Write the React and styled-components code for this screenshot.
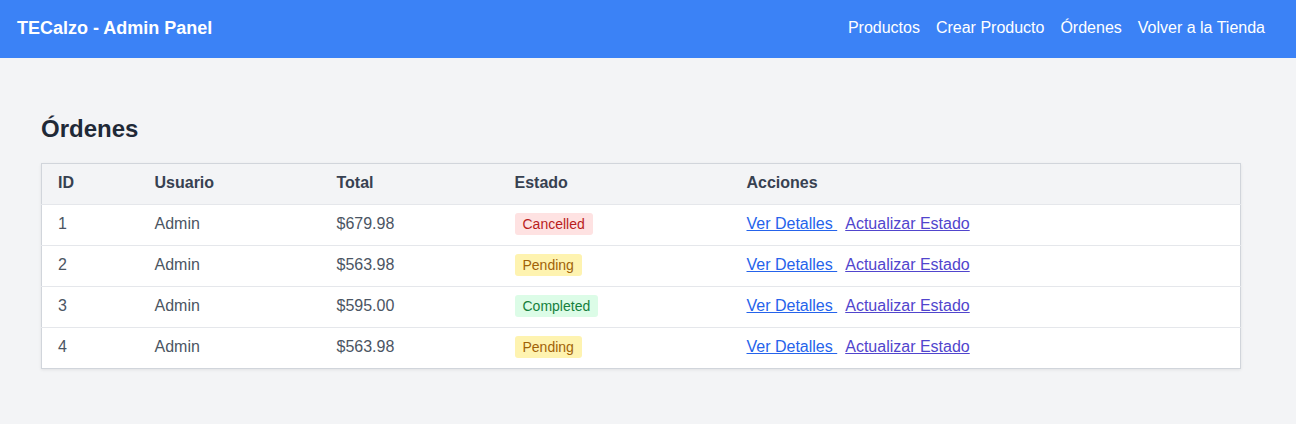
import styled, { createGlobalStyle } from 'styled-components';

const GlobalStyle = createGlobalStyle`
  body {
    margin: 0;
    background: #f3f4f6;
    font-family: "Liberation Sans", Arial, sans-serif;
  }
`

const Nav = styled.nav`
  height: 58px;
  box-sizing: border-box;
  padding: 0 31px 2px 17px;
  background: #3b82f6;
  color: #ffffff;
  display: flex;
  align-items: center;
  justify-content: space-between;
`

const Brand = styled.div`
  font-size: 18px;
  line-height: 28px;
  font-weight: 700;
`

const NavLinks = styled.div`
  display: flex;
  gap: 16px;
`

const NavLink = styled.a`
  font-size: 16px;
  line-height: 24px;
  color: #ffffff;
  text-decoration: none;
`

const Main = styled.main`
  padding: 55px 41px 40px 41px;
`

const Title = styled.h1`
  margin: 0 0 18px;
  font-size: 24px;
  line-height: 32px;
  font-weight: 700;
  color: #1f2937;
`

const Table = styled.table`
  width: 1200px;
  border-collapse: collapse;
  table-layout: fixed;
  background: #ffffff;
  border: 1px solid #d1d5db;
  box-shadow: 0 1px 3px rgba(0, 0, 0, 0.08);
`

const HeadRow = styled.tr`
  background: #f3f4f6;
`

const Th = styled.th`
  padding: 7px 16px 9px;
  font-size: 16px;
  line-height: 24px;
  font-weight: 700;
  text-align: left;
  color: #374151;
`

const Row = styled.tr`
  border-top: 1px solid #e5e7eb;
`

const Td = styled.td`
  padding: 7px 16px 9px;
  font-size: 16px;
  line-height: 24px;
  color: #4b5563;
`

const badgeColors = {
  Cancelled: { bg: '#fee2e2', fg: '#b91c1c' },
  Pending: { bg: '#fef3b0', fg: '#a16207' },
  Completed: { bg: '#dcfce7', fg: '#15803d' },
}

const Badge = styled.span`
  display: inline-block;
  padding: 1px 8px;
  border-radius: 3px;
  font-size: 14px;
  line-height: 20px;
  background: ${props => badgeColors[props.status].bg};
  color: ${props => badgeColors[props.status].fg};
`

const ActionLink = styled.a`
  color: ${props => props.visited ? '#5145cd' : '#2563eb'};
  text-decoration: underline;
  cursor: pointer;
  margin-right: ${props => props.visited ? '0' : '8px'};
`

const orders = [
  { id: 1, user: 'Admin', total: '$679.98', status: 'Cancelled' },
  { id: 2, user: 'Admin', total: '$563.98', status: 'Pending' },
  { id: 3, user: 'Admin', total: '$595.00', status: 'Completed' },
  { id: 4, user: 'Admin', total: '$563.98', status: 'Pending' },
]

export default function App () {
  return (
    <>
      <GlobalStyle />
      <Nav>
        <Brand>TECalzo - Admin Panel</Brand>
        <NavLinks>
          <NavLink>Productos</NavLink>
          <NavLink>Crear Producto</NavLink>
          <NavLink>Órdenes</NavLink>
          <NavLink>Volver a la Tienda</NavLink>
        </NavLinks>
      </Nav>
      <Main>
        <Title>Órdenes</Title>
        <Table>
          <colgroup>
            <col style={{ width: 97 }} />
            <col style={{ width: 182 }} />
            <col style={{ width: 178 }} />
            <col style={{ width: 232 }} />
            <col />
          </colgroup>
          <thead>
            <HeadRow>
              <Th>ID</Th>
              <Th>Usuario</Th>
              <Th>Total</Th>
              <Th>Estado</Th>
              <Th>Acciones</Th>
            </HeadRow>
          </thead>
          <tbody>
            {orders.map(order => (
              <Row key={order.id}>
                <Td>{order.id}</Td>
                <Td>{order.user}</Td>
                <Td>{order.total}</Td>
                <Td><Badge status={order.status}>{order.status}</Badge></Td>
                <Td>
                  <ActionLink>{'Ver Detalles '}</ActionLink>
                  <ActionLink visited>Actualizar Estado</ActionLink>
                </Td>
              </Row>
            ))}
          </tbody>
        </Table>
      </Main>
    </>
  )
}
